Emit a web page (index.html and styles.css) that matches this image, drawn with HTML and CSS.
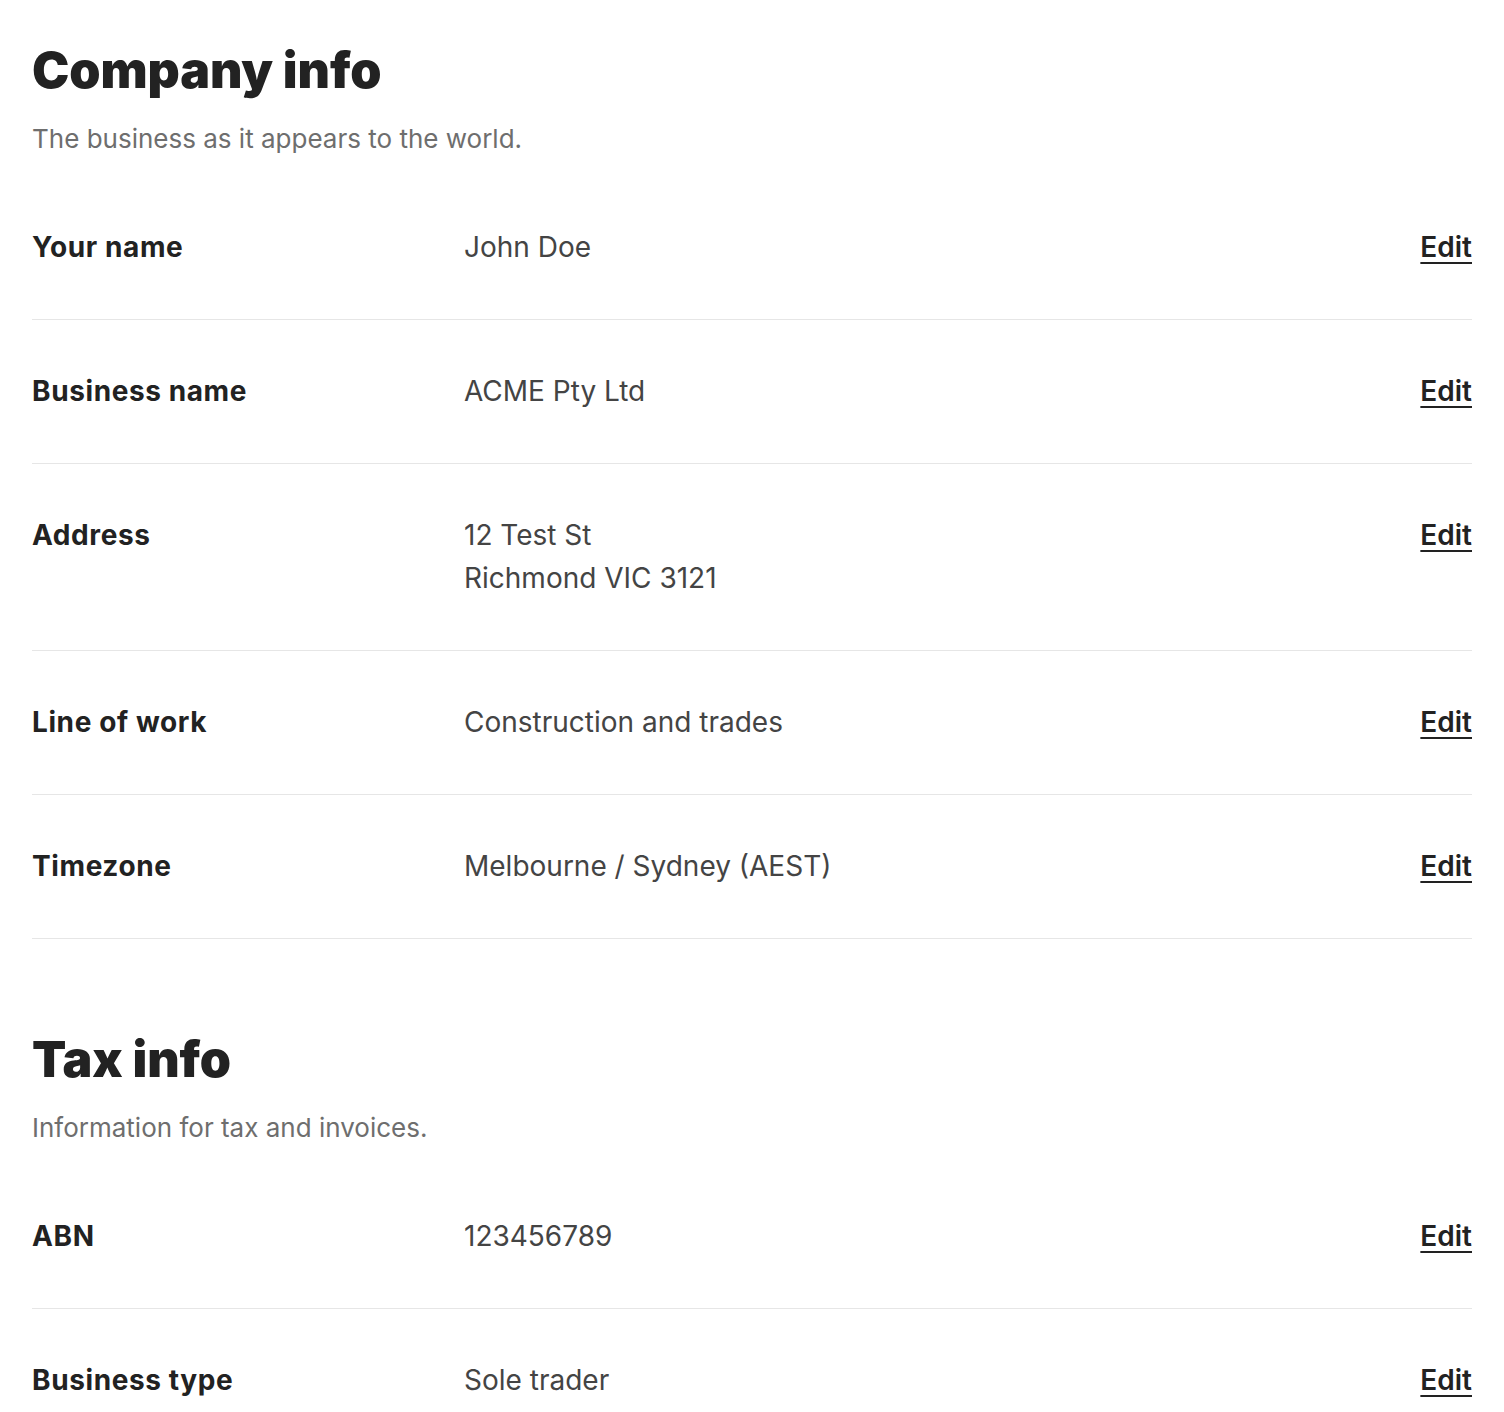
FILE: index.html
```html
<!DOCTYPE html>
<html lang="en">
<head>
    <meta charset="UTF-8">
    <title>Settings</title>
    <link rel="stylesheet" href="styles.css">
</head>
<body>
    <section class="section">
        <h1 class="section-title">Company info</h1>
        <p class="section-sub">The business as it appears to the world.</p>
        <div class="row">
            <div class="label">Your name</div>
            <div class="value">John Doe</div>
            <a class="edit" href="#">Edit</a>
        </div>
        <div class="row">
            <div class="label">Business name</div>
            <div class="value">ACME Pty Ltd</div>
            <a class="edit" href="#">Edit</a>
        </div>
        <div class="row">
            <div class="label">Address</div>
            <div class="value">12 Test St<br>Richmond VIC 3121</div>
            <a class="edit" href="#">Edit</a>
        </div>
        <div class="row">
            <div class="label">Line of work</div>
            <div class="value">Construction and trades</div>
            <a class="edit" href="#">Edit</a>
        </div>
        <div class="row">
            <div class="label">Timezone</div>
            <div class="value">Melbourne / Sydney (AEST)</div>
            <a class="edit" href="#">Edit</a>
        </div>
    </section>

    <section class="section">
        <h1 class="section-title">Tax info</h1>
        <p class="section-sub">Information for tax and invoices.</p>
        <div class="row">
            <div class="label">ABN</div>
            <div class="value">123456789</div>
            <a class="edit" href="#">Edit</a>
        </div>
        <div class="row">
            <div class="label">Business type</div>
            <div class="value">Sole trader</div>
            <a class="edit" href="#">Edit</a>
        </div>
    </section>
</body>
</html>
```

FILE: styles.css
```css
/* General styles */
body {
    font-family: Inter, "Liberation Sans", Arial, sans-serif;
    background: #fff;
    color: #222;
    margin: 0;
    padding: 40px 32px;
}

.section + .section {
    margin-top: 90px;
}

.section-title {
    font-size: 50px;
    font-weight: 900;
    line-height: 60px;
    letter-spacing: -0.1px;
    color: #222;
    margin: 0;
}

.section-sub {
    font-size: 26px;
    line-height: 36px;
    color: #6e6e6e;
    margin: 21px 0 19px;
}

/* Rows */
.row {
    display: grid;
    grid-template-columns: 432px 1fr auto;
    align-items: start;
    padding: 50px 0;
    border-bottom: 1px solid #e6e6e6;
}

.label {
    font-size: 28px;
    font-weight: 700;
    line-height: 43px;
    letter-spacing: 0.6px;
    color: #222;
}

.value {
    font-size: 28px;
    line-height: 43px;
    color: #444;
}

.edit {
    font-size: 28px;
    font-weight: 600;
    line-height: 43px;
    color: #222;
    text-decoration: underline;
    text-decoration-thickness: 2px;
    text-underline-offset: 5px;
}
```
